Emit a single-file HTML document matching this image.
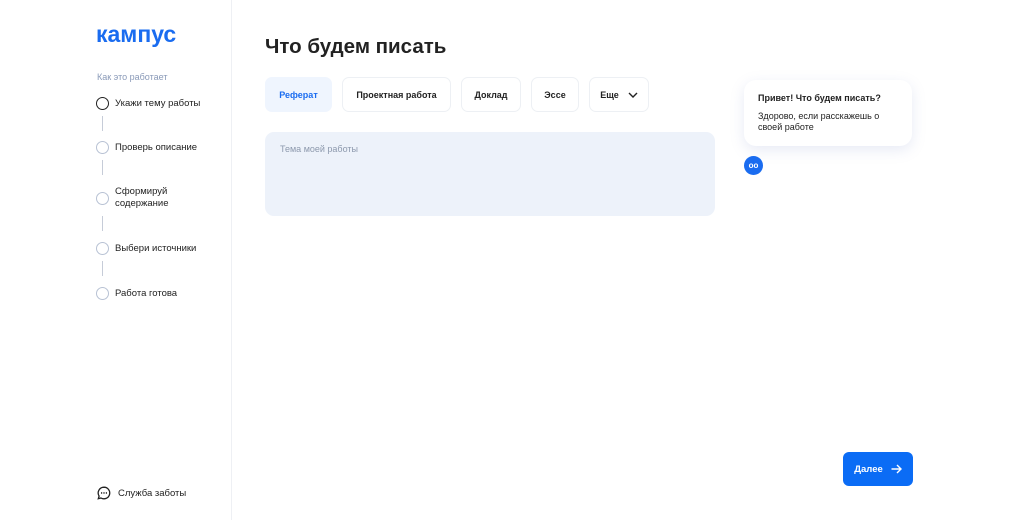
<!DOCTYPE html>
<html><head><meta charset="utf-8"><style>
*{margin:0;padding:0;box-sizing:border-box}
body{width:1024px;height:520px;background:#fff;font-family:"Liberation Sans",sans-serif;color:#222;position:relative;overflow:hidden}
.side{position:absolute;left:0;top:0;width:232px;height:520px;border-right:1px solid #eef0f4}
.logo{position:absolute;left:96px;top:21px;font-size:23px;font-weight:bold;color:#1a6cf0;letter-spacing:0px}
.how{position:absolute;left:97px;top:72px;font-size:9px;color:#8a9ab8}
.step{position:absolute;left:96px;font-size:9.5px;color:#222;display:flex;align-items:center}
.step i{width:13px;height:13px;border:1.5px solid #b8c2d4;border-radius:50%;margin-right:6px;flex:none}
.line{position:absolute;left:102px;width:1px;height:15px;background:#c6ccd8}
.abs{position:absolute}
h1{position:absolute;left:265px;top:35px;font-size:20.5px;font-weight:bold;color:#222}
.tab{position:absolute;top:77px;height:35px;border:1px solid #edf0f4;border-radius:7px;font-size:9px;font-weight:bold;display:flex;align-items:center;justify-content:center;color:#222}
</style></head><body>
<div class="side">
<div class="logo">кампус</div>
<div class="how">Как это работает</div>
<div class="step" style="top:97px"><i style="border-color:#222"></i>Укажи тему работы</div>
<div class="line" style="top:116px"></div>
<div class="step" style="top:141px"><i></i>Проверь описание</div>
<div class="line" style="top:160px"></div>
<div class="step" style="top:186px"><i></i><span style="line-height:12px">Сформируй<br>содержание</span></div>
<div class="line" style="top:216px"></div>
<div class="step" style="top:242px"><i></i>Выбери источники</div>
<div class="line" style="top:261px"></div>
<div class="step" style="top:287px"><i></i>Работа готова</div>
<div class="step" style="top:486px;left:97px"><svg width="14" height="14" viewBox="0 0 14 14" style="margin-right:7px"><path d="M7 1.2a5.8 5.8 0 1 1-3 10.8L1.3 12.7l.8-2.6A5.8 5.8 0 0 1 7 1.2z" fill="none" stroke="#222" stroke-width="1.3"/><circle cx="4.6" cy="7" r=".7"/><circle cx="7" cy="7" r=".7"/><circle cx="9.4" cy="7" r=".7"/></svg>Служба заботы</div>
</div>
<h1>Что будем писать</h1>
<div class="tab" style="left:265px;width:67px;background:#eff5fe;border-color:#eff5fe;color:#1a6cf0">Реферат</div>
<div class="tab" style="left:342px;width:109px">Проектная работа</div>
<div class="tab" style="left:461px;width:60px">Доклад</div>
<div class="tab" style="left:531px;width:48px">Эссе</div>
<div class="tab" style="left:589px;width:60px">Еще <svg width="10" height="6" viewBox="0 0 10 6" style="margin-left:9px"><path d="M1 1l4 4 4-4" fill="none" stroke="#222" stroke-width="1.4"/></svg></div>
<div class="abs" style="left:265px;top:132px;width:450px;height:84px;background:#edf2fa;border-radius:9px;padding:12px 15px;font-size:9px;color:#8d99ad">Тема моей работы</div>
<div class="abs" style="left:744px;top:80px;width:168px;height:66px;background:#fff;border-radius:12px;box-shadow:0 4px 14px rgba(120,140,200,.18);padding:13px 14px;font-size:9px;line-height:11.5px">
<div style="font-weight:bold;margin-bottom:6px">Привет! Что будем писать?</div>
<div>Здорово, если расскажешь о своей работе</div></div>
<div class="abs" style="left:744px;top:156px;width:19px;height:19px;border-radius:50%;background:#1a6cf0;color:#fff;font-size:8px;font-weight:bold;display:flex;align-items:center;justify-content:center">oo</div>
<div class="abs" style="left:843px;top:452px;width:70px;height:34px;background:#0b6cf5;border-radius:6px;color:#fff;font-size:9.5px;font-weight:bold;display:flex;align-items:center;justify-content:center">Далее <svg width="11" height="10" viewBox="0 0 11 10" style="margin-left:8px"><path d="M0.5 5h9.5M6 1l4 4-4 4" fill="none" stroke="#fff" stroke-width="1.4"/></svg></div>
</body></html>
